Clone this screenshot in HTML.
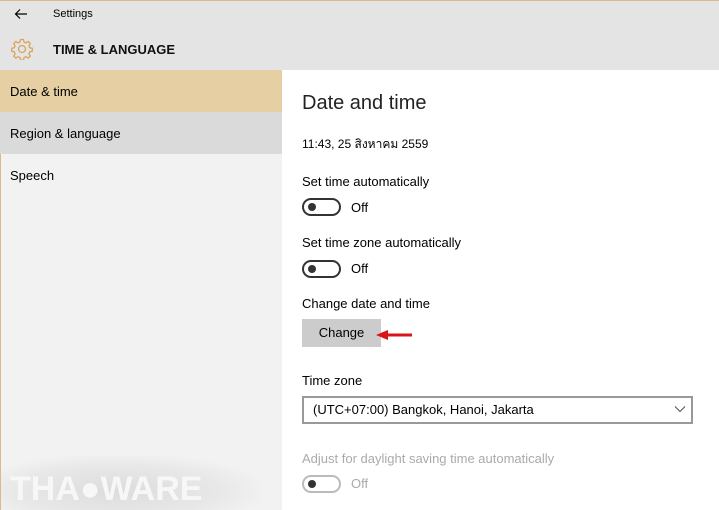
<!DOCTYPE html>
<html><head><style>
*{margin:0;padding:0;box-sizing:border-box}
html,body{width:719px;height:510px;overflow:hidden}
body{font-family:"Liberation Sans","Noto Sans CJK SC",sans-serif;color:#000;background:#fff;position:relative;font-size:13px}
.a{position:absolute;white-space:nowrap}
.tg{position:absolute;width:39px;height:18px;border:2px solid #333;border-radius:9px}
.tg::after{content:"";position:absolute;left:4px;top:3px;width:8px;height:8px;border-radius:50%;background:#333}
</style></head><body>
<div class="a" style="left:0;top:0;width:719px;height:70px;background:#e4e4e4;border-top:1px solid #dcb98c"></div>
<div class="a" style="left:0;top:70px;width:282px;height:440px;background:#f2f2f2;border-left:1px solid #dcb98c;overflow:hidden">
<div class="a" style="left:0;top:385px;width:260px;height:60px;background:radial-gradient(ellipse at 45% 60%,#dcdcdc 0%,#e8e8e8 50%,rgba(242,242,242,0) 75%)"></div>
</div>
<div class="a" style="left:0;top:70px;width:282px;height:42px;background:#e6cfa2"></div>
<div class="a" style="left:0;top:112px;width:282px;height:42px;background:#dadada"></div>
<svg class="a" style="left:14px;top:8px" width="14" height="12" viewBox="0 0 14 12"><path d="M13 6H2M6 1.5L1.5 6 6 10.5" fill="none" stroke="#000" stroke-width="1.2"/></svg>
<div class="a" style="left:53px;top:8px;font-size:11px">Settings</div>
<svg class="a" style="left:11px;top:38px" width="22" height="22" viewBox="0 0 22 22"><g fill="none" stroke="#d9a55a" stroke-width="1.3"><circle cx="11" cy="11" r="3.5"/><path d="M9.5 1.5h3l.5 2.5 2 .9 2.2-1.4 2.1 2.1-1.4 2.2.9 2 2.5.5v3l-2.5.5-.9 2 1.4 2.2-2.1 2.1-2.2-1.4-2 .9-.5 2.5h-3l-.5-2.5-2-.9-2.2 1.4-2.1-2.1 1.4-2.2-.9-2-2.5-.5v-3l2.5-.5.9-2-1.4-2.2 2.1-2.1 2.2 1.4 2-.9z"/></g></svg>
<div class="a" style="left:53px;top:42px;font-size:13px;font-weight:bold;color:#111">TIME &amp; LANGUAGE</div>
<div class="a" style="left:10px;top:84px">Date &amp; time</div>
<div class="a" style="left:10px;top:126px">Region &amp; language</div>
<div class="a" style="left:10px;top:168px">Speech</div>
<div class="a" style="left:302px;top:92px;font-size:20px;color:#222">Date and time</div>
<div class="a" style="left:302px;top:135px;font-size:12px">11:43, 25 สิงหาคม 2559</div>
<div class="a" style="left:302px;top:174px">Set time automatically</div>
<div class="tg" style="left:302px;top:198px"></div><div class="a" style="left:351px;top:200px">Off</div>
<div class="a" style="left:302px;top:235px">Set time zone automatically</div>
<div class="tg" style="left:302px;top:260px"></div><div class="a" style="left:351px;top:261px">Off</div>
<div class="a" style="left:302px;top:296px">Change date and time</div>
<div class="a" style="left:302px;top:319px;width:79px;height:28px;background:#ccc;text-align:center;line-height:28px">Change</div>
<svg class="a" style="left:374px;top:328px" width="42" height="14" viewBox="0 0 42 14"><path d="M2 7L14 2V5.5H38V8.5H14V12Z" fill="#d8141a"/></svg>
<div class="a" style="left:302px;top:373px">Time zone</div>
<div class="a" style="left:302px;top:396px;width:391px;height:28px;border:2px solid #999;padding-left:9px;line-height:24px">(UTC+07:00) Bangkok, Hanoi, Jakarta</div>
<svg class="a" style="left:674px;top:405px" width="12" height="8" viewBox="0 0 12 8"><path d="M1 1.5L6 6.5 11 1.5" fill="none" stroke="#555" stroke-width="1.1"/></svg>
<div class="a" style="left:302px;top:451px;color:#aaa">Adjust for daylight saving time automatically</div>
<div class="tg" style="left:302px;top:475px;border-color:#bbb"></div>
<div class="a" style="left:351px;top:476px;color:#aaa">Off</div>
<div class="a" style="left:10px;top:470px;font-size:34px;font-weight:bold;color:#f7f7f7">THA<span>●</span>WARE</div>
</body></html>
